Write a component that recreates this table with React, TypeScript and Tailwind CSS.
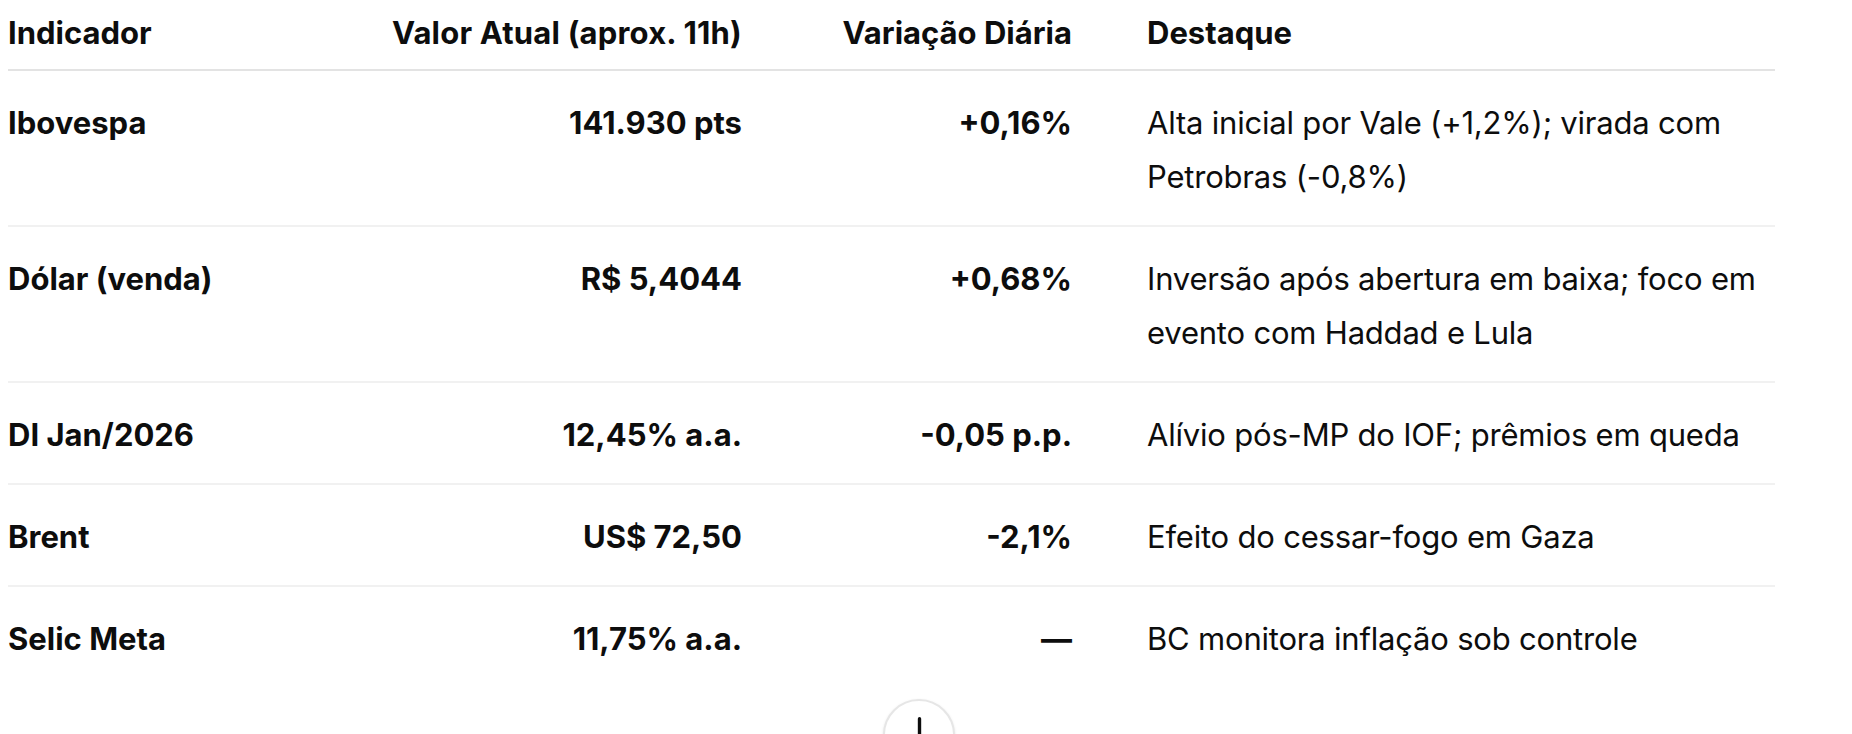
import React from 'react';

type Row = {
  name: string;
  value: string;
  change: string;
  note: string;
};

const rows: Row[] = [
  { name: 'Ibovespa', value: '141.930 pts', change: '+0,16%', note: 'Alta inicial por Vale (+1,2%); virada com Petrobras (-0,8%)' },
  { name: 'Dólar (venda)', value: 'R$ 5,4044', change: '+0,68%', note: 'Inversão após abertura em baixa; foco em evento com Haddad e Lula' },
  { name: 'DI Jan/2026', value: '12,45% a.a.', change: '-0,05 p.p.', note: 'Alívio pós-MP do IOF; prêmios em queda' },
  { name: 'Brent', value: 'US$ 72,50', change: '-2,1%', note: 'Efeito do cessar-fogo em Gaza' },
  { name: 'Selic Meta', value: '11,75% a.a.', change: '—', note: 'BC monitora inflação sob controle' },
];

const cols = 'grid grid-cols-[300px_434px_330px_1fr]';

export default function App() {
  return (
    <div
      className="relative h-[734px] w-[1852px] overflow-hidden bg-white text-[31px] leading-[54px] text-[#0d0d0d]"
      style={{ fontFamily: 'Inter, "Noto Sans", sans-serif' }}
    >
      <div className="ml-2 w-[1767px]">
        {/* Header */}
        <div className={`${cols} border-b-2 border-[#e3e3e3] pt-[6px] pb-[9px] font-bold`}>
          <div>Indicador</div>
          <div className="text-right tracking-[0.2px]">Valor Atual (aprox. 11h)</div>
          <div className="text-right">Variação Diária</div>
          <div className="pl-[75px]">Destaque</div>
        </div>

        {/* Body */}
        {rows.map((row, i) => (
          <div
            key={row.name}
            className={`${cols} pt-[25px] pb-[21px] ${i < rows.length - 1 ? 'border-b-2 border-[#f1f1f1]' : ''}`}
          >
            <div className="font-bold">{row.name}</div>
            <div className="text-right font-bold">{row.value}</div>
            <div className="text-right font-bold">{row.change}</div>
            <div className="pl-[75px] tracking-[-0.2px]">{row.note}</div>
          </div>
        ))}
      </div>

      {/* Scroll to bottom button */}
      <div className="absolute left-[883px] top-[699px] flex h-[72px] w-[72px] items-center justify-center rounded-full border-2 border-[#e6e6e6] bg-white shadow-sm">
        <svg width="45" height="45" viewBox="0 0 24 24" fill="none" stroke="#0d0d0d" strokeWidth="1.8" strokeLinecap="round" strokeLinejoin="round">
          <path d="M12 3v18" />
          <path d="M5.5 14.5 12 21l6.5-6.5" />
        </svg>
      </div>
    </div>
  );
}
